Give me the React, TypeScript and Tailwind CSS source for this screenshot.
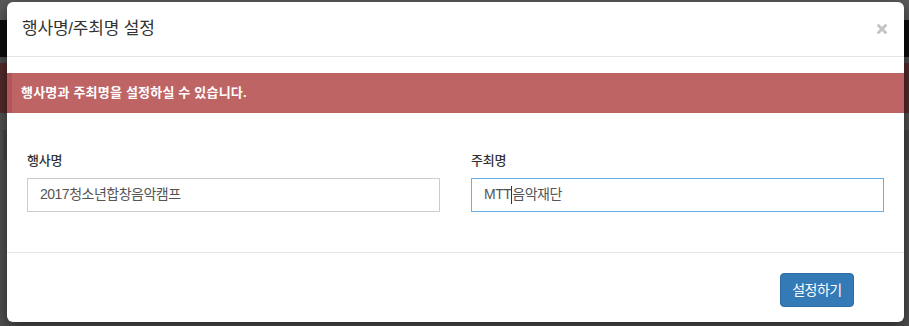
import { X } from 'lucide-react'

const font = { fontFamily: '"Liberation Sans", "Noto Sans CJK KR", sans-serif' }

function Field({ label, value, focused }: { label: string; value: string; focused?: boolean }) {
  return (
    <div>
      <div className="text-[13px] font-medium text-[#333] tracking-[-0.2px] mb-[7px]">{label}</div>
      <div
        className={
          focused
            ? 'h-[34px] border border-[#66afe9] px-3 flex items-center text-[14px] text-[#555] tracking-[-0.5px]'
            : 'h-[34px] border border-[#ccc] px-3 flex items-center text-[14px] text-[#555] tracking-[-0.5px]'
        }
      >
        {focused ? (
          <>
            <span>MTT</span>
            <span className="w-px h-[18px] bg-[#333]" />
            <span>음악재단</span>
          </>
        ) : (
          value
        )}
      </div>
    </div>
  )
}

export default function App() {
  return (
    <div className="relative w-[909px] h-[326px] overflow-hidden bg-[#505050]" style={font}>
      {/* dimmed page behind the modal */}
      <div className="h-[20px] bg-[#5a5a5a]" />
      <div className="h-[37px] bg-[#0c0c0c]" />
      <div className="h-[6px] bg-[#4c4c4c]" />
      <div className="h-[50px] bg-[#552b2b]" />
      <div className="h-[17px] bg-[#525252]" />
      <div className="h-[30px] bg-[#474747] border-l-[3px] border-[#505050]" />

      {/* modal */}
      <div className="absolute left-[7px] top-[2px] w-[897px] h-[320px] bg-white rounded-[6px] shadow-[0_5px_15px_rgba(0,0,0,0.5)] flex flex-col">
        <div className="h-[55px] border-b border-[#e5e5e5] flex items-center justify-between pl-[15px] pr-[15px]">
          <h4 className="text-[17px] text-[#333] tracking-[-0.2px]">행사명/주최명 설정</h4>
          <X className="w-[14px] h-[14px] text-[#c4c4c4]" strokeWidth={5} />
        </div>

        <div className="mt-[16px] h-[40px] bg-[#bf6464] border-l-[5px] border-[#b25757] pl-[9px] flex items-center text-white text-[13px] font-bold tracking-[0.2px]">
          행사명과 주최명을 설정하실 수 있습니다.
        </div>

        <div className="grid grid-cols-2 gap-[31px] px-5 pt-[38px] h-[139px]">
          <Field label="행사명" value="2017청소년합창음악캠프" />
          <Field label="주최명" value="MTT음악재단" focused />
        </div>

        <div className="flex-1 border-t border-[#e5e5e5] flex justify-end pt-[20px] pr-[50px]">
          <button className="h-[34px] w-[74px] rounded-[4px] bg-[#337ab7] border border-[#2e6da4] text-white text-[14px] tracking-[-0.5px]">
            설정하기
          </button>
        </div>
      </div>
    </div>
  )
}
